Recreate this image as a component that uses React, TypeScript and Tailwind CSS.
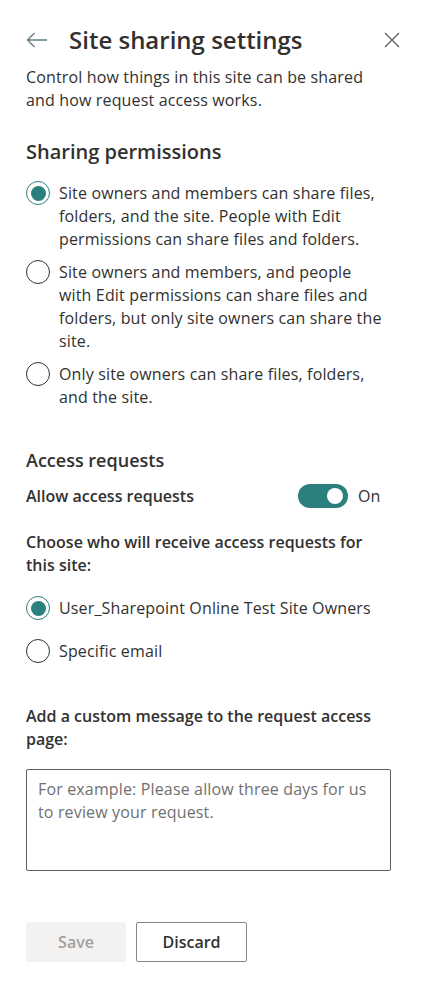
import React, { useState } from 'react';

const font = { fontFamily: '"Segoe UI", "Open Sans", "Liberation Sans", sans-serif' };

// lines are broken by hand so wrapping matches the panel width
const Lines: React.FC<{ lines: string[] }> = ({ lines }) => (
  <>
    {lines.map((l, i) => (
      <React.Fragment key={i}>
        {l}
        {i < lines.length - 1 && <br />}
      </React.Fragment>
    ))}
  </>
);

const Radio: React.FC<{ checked: boolean; lines: string[]; onSelect: () => void }> = ({ checked, lines, onSelect }) => (
  <label className="flex items-start gap-[9px] cursor-pointer" onClick={onSelect}>
    <span
      className={`mt-[-1px] shrink-0 w-6 h-6 rounded-full border flex items-center justify-center ${
        checked ? 'border-[#2b807e]' : 'border-[#323130]'
      }`}
    >
      {checked && <span className="w-[15px] h-[15px] rounded-full bg-[#2b807e]" />}
    </span>
    <span className="text-[16px] leading-[23px] tracking-[0.15px] text-[#323130] whitespace-nowrap">
      <Lines lines={lines} />
    </span>
  </label>
);

const App: React.FC = () => {
  const [sharing, setSharing] = useState(0);
  const [receiver, setReceiver] = useState(0);
  const [allow, setAllow] = useState(true);

  return (
    <div className="w-[421px] min-h-[986px] bg-white text-[#323130]" style={font}>
      <div className="pl-[26px] pr-[20px] pt-[24px]">
        {/* header */}
        <div className="flex items-center h-[32px]">
          <button className="w-[22px] h-[22px] flex items-center justify-center text-[#5f7a85]">
            <svg width="22" height="16" viewBox="0 0 22 16" fill="none" stroke="currentColor" strokeWidth="1.3">
              <path d="M21 8H1.5M8.5 1L1.5 8l7 7" />
            </svg>
          </button>
          <h1 className="ml-[21px] text-[24px] font-semibold leading-[32px] flex-1">Site sharing settings</h1>
          <button className="w-[18px] h-[18px] flex items-center justify-center text-[#605e5c]">
            <svg width="16" height="16" viewBox="0 0 16 16" stroke="currentColor" strokeWidth="1.3">
              <path d="M1 1l14 14M15 1L1 15" />
            </svg>
          </button>
        </div>

        <p className="mt-[10px] text-[16px] leading-[23px] tracking-[0.15px] whitespace-nowrap">
          <Lines lines={['Control how things in this site can be shared', 'and how request access works.']} />
        </p>

        <h2 className="mt-[26px] text-[20px] font-semibold leading-[28px]">Sharing permissions</h2>

        <div className="mt-[16px] flex flex-col gap-[10px]">
          <Radio
            checked={sharing === 0}
            onSelect={() => setSharing(0)}
            lines={['Site owners and members can share files,', 'folders, and the site. People with Edit', 'permissions can share files and folders.']}
          />
          <Radio
            checked={sharing === 1}
            onSelect={() => setSharing(1)}
            lines={[
              'Site owners and members, and people',
              'with Edit permissions can share files and',
              'folders, but only site owners can share the',
              'site.',
            ]}
          />
          <Radio
            checked={sharing === 2}
            onSelect={() => setSharing(2)}
            lines={['Only site owners can share files, folders,', 'and the site.']}
          />
        </div>

        <h2 className="mt-[38px] text-[18px] font-semibold leading-[26px]">Access requests</h2>

        <div className="mt-[10px] flex items-center h-[26px]">
          <span className="text-[16px] font-semibold w-[272px]">Allow access requests</span>
          <button
            onClick={() => setAllow(!allow)}
            className={`w-[50px] h-[24px] rounded-full flex items-center px-[5px] ${
              allow ? 'bg-[#2b807e] justify-end' : 'bg-white border border-[#323130] justify-start'
            }`}
          >
            <span className={`w-[16px] h-[16px] rounded-full ${allow ? 'bg-white' : 'bg-[#323130]'}`} />
          </button>
          <span className="ml-[10px] text-[16px]">{allow ? 'On' : 'Off'}</span>
        </div>

        <p className="mt-[22px] text-[16px] font-semibold leading-[23px] whitespace-nowrap">
          <Lines lines={['Choose who will receive access requests for', 'this site:']} />
        </p>

        <div className="mt-[20px] flex flex-col gap-[20px]">
          <Radio checked={receiver === 0} onSelect={() => setReceiver(0)} lines={['User_Sharepoint Online Test Site Owners']} />
          <Radio checked={receiver === 1} onSelect={() => setReceiver(1)} lines={['Specific email']} />
        </div>

        <p className="mt-[42px] text-[16px] font-semibold leading-[23px] whitespace-nowrap">
          <Lines lines={['Add a custom message to the request access', 'page:']} />
        </p>

        <textarea
          className="mt-[18px] block w-[365px] h-[102px] border border-[#605e5c] rounded-[2px] px-[11px] py-[8px] text-[16px] leading-[23px] tracking-[0.15px] resize-none outline-none placeholder:text-[#707070]"
          style={font}
          placeholder="For example: Please allow three days for us to review your request."
        />

        <div className="mt-[51px] flex gap-[10px]">
          <button disabled className="w-[100px] h-[40px] rounded-[2px] bg-[#f3f2f1] text-[#a19f9d] text-[16px] font-semibold">
            Save
          </button>
          <button className="w-[111px] h-[40px] rounded-[2px] border border-[#8a8886] bg-white text-[#323130] text-[16px] font-semibold">
            Discard
          </button>
        </div>
      </div>
    </div>
  );
};

export default App;
